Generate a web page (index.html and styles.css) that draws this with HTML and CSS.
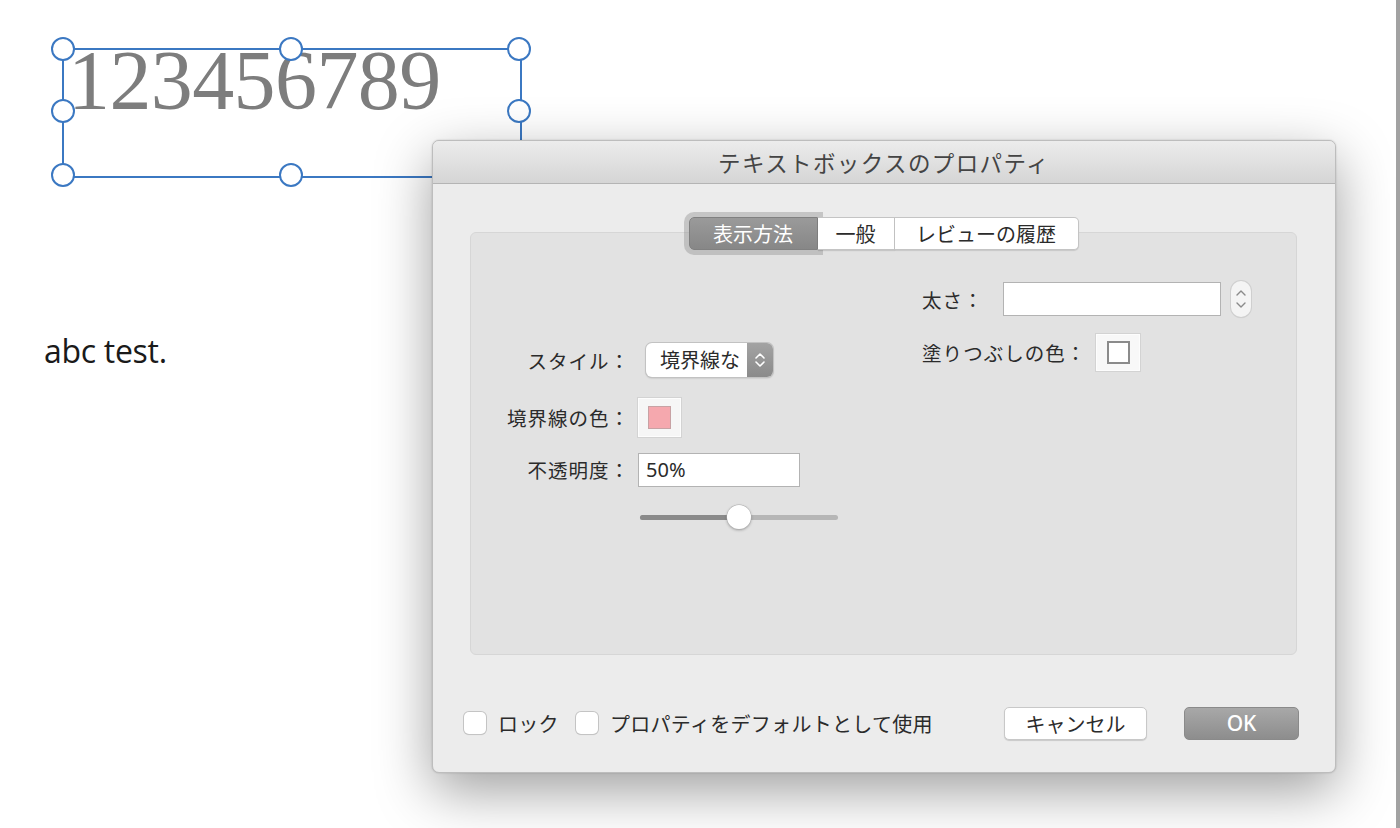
FILE: index.html
```html
<!DOCTYPE html>
<html lang="ja">
<head>
    <meta charset="UTF-8">
    <title>テキストボックスのプロパティ</title>
    <link rel="stylesheet" href="styles.css">
</head>
<body>
    <div class="canvas">
        <!-- selected text box -->
        <div class="textbox">
            <div class="textbox-text">123456789</div>
        </div>
        <span class="handle h-tl"></span>
        <span class="handle h-tc"></span>
        <span class="handle h-tr"></span>
        <span class="handle h-ml"></span>
        <span class="handle h-mr"></span>
        <span class="handle h-bl"></span>
        <span class="handle h-bc"></span>

        <div class="plain-text">abc test.</div>

        <!-- properties dialog -->
        <div class="dialog">
            <div class="dialog-title">テキストボックスのプロパティ</div>
            <div class="dialog-body">
                <div class="tabs">
                    <button class="tab active">表示方法</button>
                    <button class="tab">一般</button>
                    <button class="tab">レビューの履歴</button>
                </div>

                <div class="group">
                    <div class="col-left">
                        <div class="row row-style">
                            <span class="label">スタイル：</span>
                            <div class="popup">
                                <span class="popup-text">境界線な</span>
                                <span class="popup-arrows">
                                    <svg width="14" height="20" viewBox="0 0 14 20"><path d="M3 8 L7 4 L11 8 M3 12 L7 16 L11 12" fill="none" stroke="#fff" stroke-width="1.6" stroke-linecap="round" stroke-linejoin="round"/></svg>
                                </span>
                            </div>
                        </div>
                        <div class="row row-color">
                            <span class="label">境界線の色：</span>
                            <div class="well"><span class="swatch pink"></span></div>
                        </div>
                        <div class="row row-opacity">
                            <span class="label">不透明度：</span>
                            <input class="field field-opacity" type="text" value="50%">
                        </div>
                        <div class="row row-slider">
                            <span class="label"></span>
                            <div class="slider">
                                <div class="slider-fill" style="width: 50%"></div>
                                <div class="slider-knob" style="left: 50%"></div>
                            </div>
                        </div>
                    </div>

                    <div class="col-right">
                        <div class="row row-weight">
                            <span class="label label-weight">太さ：</span>
                            <input class="field field-weight" type="text" value="">
                            <span class="stepper">
                                <svg width="20" height="36" viewBox="0 0 20 36"><path d="M6 14 L10 10 L14 14 M6 22 L10 26 L14 22" fill="none" stroke="#8a8a8a" stroke-width="1.4" stroke-linecap="round" stroke-linejoin="round"/></svg>
                            </span>
                        </div>
                        <div class="row row-fill">
                            <span class="label label-fill">塗りつぶしの色：</span>
                            <div class="well well-fill"><span class="swatch white"></span></div>
                        </div>
                    </div>
                </div>

                <div class="footer">
                    <label class="check"><span class="box"></span>ロック</label>
                    <label class="check"><span class="box"></span>プロパティをデフォルトとして使用</label>
                    <div class="spacer"></div>
                    <button class="btn btn-cancel">キャンセル</button>
                    <button class="btn btn-ok">OK</button>
                </div>
            </div>
        </div>
    </div>
</body>
</html>
```

FILE: styles.css
```css
body {
    margin: 0;
    background-color: white;
    font-family: "Noto Sans CJK JP", "Noto Sans", sans-serif;
    color: #2b2b2b;
}

.canvas {
    position: relative;
    width: 1400px;
    height: 828px;
    box-sizing: border-box;
    border-right: 4px solid #a2a2a2;
    overflow: hidden;
}

.textbox {
    position: absolute;
    left: 62px;
    top: 48px;
    width: 456px;
    height: 126px;
    border: 2px solid #3b78c2;
}

.textbox-text {
    font-family: "Liberation Serif", serif;
    font-size: 84px;
    line-height: 1;
    letter-spacing: -0.6px;
    color: #7d7d7d;
    margin: -11px 0 0 4px;
}

.handle {
    position: absolute;
    width: 20px;
    height: 20px;
    margin: -12px 0 0 -12px;
    border: 2px solid #3b78c2;
    border-radius: 50%;
    background-color: white;
}

.h-tl { left: 63px; top: 49px; }
.h-tc { left: 291px; top: 49px; }
.h-tr { left: 519px; top: 49px; }
.h-ml { left: 63px; top: 111px; }
.h-mr { left: 519px; top: 111px; }
.h-bl { left: 63px; top: 175px; }
.h-bc { left: 291px; top: 175px; }

.plain-text {
    position: absolute;
    left: 44px;
    top: 329px;
    font-family: "Open Sans", sans-serif;
    font-size: 32px;
    letter-spacing: -0.3px;
    color: #1a1a1a;
}

.dialog {
    position: absolute;
    left: 432px;
    top: 140px;
    width: 904px;
    height: 633px;
    box-sizing: border-box;
    border: 1px solid #bdbdbd;
    border-radius: 7px;
    background-color: #ececec;
    box-shadow: 0 18px 55px rgba(0, 0, 0, 0.38), 0 0 2px rgba(0, 0, 0, 0.2);
    overflow: hidden;
}

.dialog-title {
    height: 42px;
    line-height: 42px;
    text-align: center;
    font-size: 22.5px;
    letter-spacing: 1.4px;
    color: #444;
    background: linear-gradient(#ececec, #d5d5d5);
    border-bottom: 1px solid #b4b4b4;
}

.dialog-body {
    padding: 0 38px 0 37px;
}

.tabs {
    display: flex;
    justify-content: center;
    margin-top: 33px;
    position: relative;
    z-index: 1;
}

.tab {
    height: 33px;
    padding: 0 21px;
    font-family: inherit;
    font-size: 20px;
    color: #2b2b2b;
    background-color: white;
    border: 1px solid #c4c4c4;
    border-left: none;
    box-shadow: 0 1px 1px rgba(0, 0, 0, 0.12);
}

.tab:last-child {
    width: 184px;
    padding: 0;
    border-radius: 0 5px 5px 0;
}

.tab.active {
    width: 129px;
    padding: 0;
    color: white;
    background: linear-gradient(#9a9a9a, #878787);
    border: 1px solid #808080;
    border-radius: 5px 0 0 5px;
    box-shadow: 0 0 0 5px rgba(150, 150, 150, 0.45);
}

.tab:nth-child(2) {
    width: 77px;
    padding: 0;
}

.group {
    display: flex;
    height: 423px;
    box-sizing: border-box;
    margin-top: -18px;
    background-color: #e2e2e2;
    border: 1px solid #d6d6d6;
    border-radius: 6px;
}

.row {
    display: flex;
    align-items: center;
}

.label {
    font-size: 19.5px;
    letter-spacing: 1px;
    color: #2b2b2b;
    white-space: nowrap;
}

.col-left {
    width: 451px;
    padding-top: 110px;
}

.col-left .label {
    width: 159px;
    text-align: right;
    margin-right: 8px;
}

.row-style { height: 34px; }
.row-color { height: 39px; margin-top: 21px; }
.row-opacity { height: 33px; margin-top: 16px; }
.row-slider { height: 24px; margin-top: 19px; }

.popup {
    display: flex;
    width: 127px;
    height: 34px;
    margin-left: 8px;
    box-sizing: border-box;
    border-radius: 6px;
    background-color: white;
    box-shadow: 0 0 0 1px #c2c2c2, 0 1px 2px rgba(0, 0, 0, 0.25);
    overflow: hidden;
}

.popup-text {
    flex: 1;
    line-height: 33px;
    padding-left: 14px;
    font-size: 20px;
    white-space: nowrap;
    overflow: hidden;
}

.popup-arrows {
    display: flex;
    align-items: center;
    justify-content: center;
    width: 26px;
    background: linear-gradient(#a3a3a3, #8a8a8a);
}

.well {
    display: flex;
    align-items: center;
    justify-content: center;
    width: 43px;
    height: 39px;
    box-sizing: border-box;
    background-color: #f6f6f6;
    border: 1px solid #fdfdfd;
    box-shadow: 0 0 0 1px #d3d3d3;
}

.swatch {
    width: 23px;
    height: 23px;
    box-sizing: border-box;
}

.swatch.pink {
    background-color: #f5a8ae;
    border: 1px solid #c7a2a4;
}

.swatch.white {
    background-color: white;
    border: 2px solid #8b8b8b;
}

.field {
    height: 34px;
    box-sizing: border-box;
    border: 1px solid #b3b3b3;
    background-color: white;
    font-family: "Noto Sans", sans-serif;
    font-size: 20px;
    color: #2b2b2b;
    padding: 0 7px;
    outline: none;
}

.field-opacity {
    width: 162px;
}

.slider {
    position: relative;
    width: 198px;
    height: 5px;
    margin-left: 2px;
    border-radius: 3px;
    background-color: #b6b6b6;
}

.slider-fill {
    height: 100%;
    border-radius: 3px;
    background-color: #8a8a8a;
}

.slider-knob {
    position: absolute;
    top: -10px;
    width: 24px;
    height: 24px;
    margin-left: -12px;
    border-radius: 50%;
    background-color: white;
    box-shadow: 0 0 0 0.5px #b0b0b0, 0 1px 3px rgba(0, 0, 0, 0.35);
}

.col-right {
    padding-top: 48px;
}

.label-weight {
    width: 81px;
}

.field-weight {
    width: 218px;
}

.stepper {
    display: flex;
    width: 20px;
    height: 36px;
    margin-left: 10px;
    border-radius: 10px;
    background-color: #f4f4f4;
    box-shadow: 0 0 0 1px #cfcfcf, 0 1px 1px rgba(0, 0, 0, 0.12);
}

.row-weight { height: 36px; }
.row-fill { height: 38px; margin-top: 16px; }

.label-fill {
    width: 174px;
}

.well-fill {
    width: 44px;
    height: 37px;
    background-color: #f8f8f8;
}

.footer {
    display: flex;
    align-items: center;
    height: 34px;
    margin-top: 51px;
    margin-left: -6px;
    margin-right: -2px;
}

.check {
    display: flex;
    align-items: center;
    font-size: 20px;
    letter-spacing: 0.3px;
    color: #2b2b2b;
    margin-right: 17px;
}

.box {
    width: 22px;
    height: 22px;
    margin-right: 12px;
    box-sizing: border-box;
    border-radius: 5px;
    background-color: white;
    box-shadow: 0 0 0 1px #c4c4c4, 0 1px 1px rgba(0, 0, 0, 0.15);
}

.spacer {
    flex: 1;
}

.btn {
    height: 33px;
    font-family: inherit;
    font-size: 20px;
    border-radius: 5px;
}

.btn-cancel {
    width: 143px;
    color: #2b2b2b;
    background-color: white;
    border: 1px solid #c8c8c8;
    box-shadow: 0 1px 1px rgba(0, 0, 0, 0.15);
}

.btn-ok {
    width: 115px;
    margin-left: 37px;
    color: white;
    font-family: "Noto Sans", sans-serif;
    font-size: 21px;
    font-weight: 500;
    background: linear-gradient(#a8a8a8, #8d8d8d);
    border: 1px solid #8a8a8a;
}
```
